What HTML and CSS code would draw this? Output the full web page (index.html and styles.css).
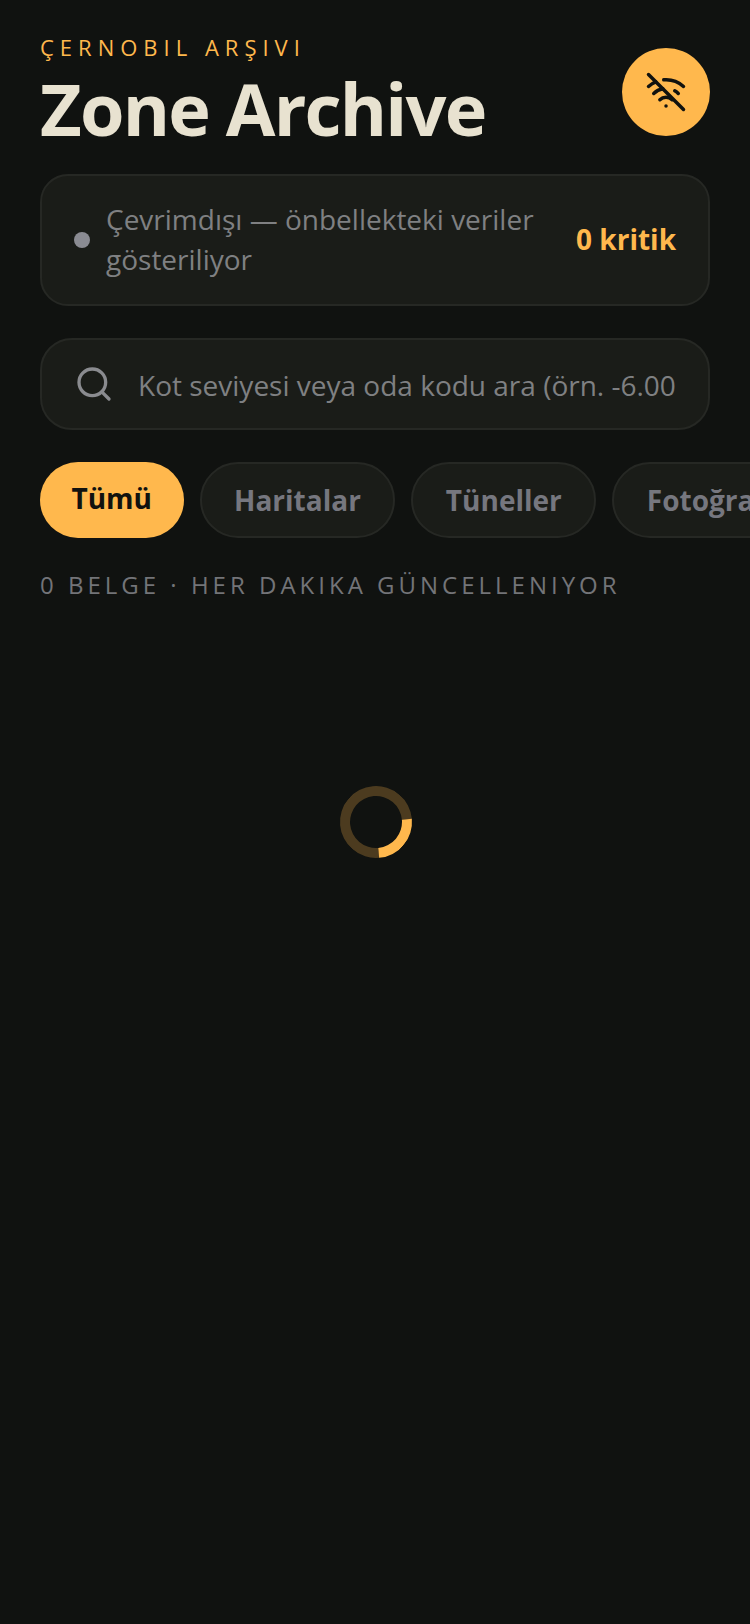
FILE: index.html
```html
<!DOCTYPE html>
<html lang="tr">
<head>
    <meta charset="UTF-8">
    <meta name="viewport" content="width=device-width, initial-scale=1.0">
    <title>Zone Archive</title>
    <link rel="stylesheet" href="styles.css">
</head>
<body>
    <div class="screen">
        <header class="top">
            <div>
                <div class="eyebrow">ÇERNOBIL ARŞIVI</div>
                <h1>Zone Archive</h1>
            </div>
            <button class="net-btn" aria-label="Çevrimdışı">
                <svg viewBox="0 0 24 24" width="42" height="42" fill="none" stroke="#11120f" stroke-width="2" stroke-linecap="round" stroke-linejoin="round">
                    <path d="M12 20h.01"/>
                    <path d="M8.5 16.429a5 5 0 0 1 7 0"/>
                    <path d="M5 12.859a10 10 0 0 1 5.17-2.69"/>
                    <path d="M19 12.859a10 10 0 0 0-2.007-1.523"/>
                    <path d="M2 8.82a15 15 0 0 1 4.177-2.643"/>
                    <path d="M22 8.82a15 15 0 0 0-11.288-3.764"/>
                    <path d="m2 2 20 20"/>
                </svg>
            </button>
        </header>

        <div class="status">
            <span class="dot"></span>
            <span class="status-text">Çevrimdışı — önbellekteki veriler gösteriliyor</span>
            <span class="critical">0 kritik</span>
        </div>

        <label class="search">
            <svg viewBox="0 0 24 24" width="40" height="40" fill="none" stroke="#8a8b8f" stroke-width="2" stroke-linecap="round" stroke-linejoin="round">
                <circle cx="11" cy="11" r="8"/>
                <path d="m21 21-4.3-4.3"/>
            </svg>
            <input type="text" placeholder="Kot seviyesi veya oda kodu ara (örn. -6.00)">
        </label>

        <div class="chips">
            <button class="chip active">Tümü</button>
            <button class="chip">Haritalar</button>
            <button class="chip">Tüneller</button>
            <button class="chip">Fotoğraflar</button>
        </div>

        <div class="summary">0 BELGE · HER DAKIKA GÜNCELLENIYOR</div>

        <div class="loader">
            <div class="spinner"></div>
        </div>
    </div>
</body>
</html>
```

FILE: styles.css
```css
* {
    box-sizing: border-box;
}

html, body {
    margin: 0;
    height: 100%;
}

body {
    background-color: #101210;
    font-family: "Open Sans", "Noto Sans", sans-serif;
    overflow: hidden;
}

.screen {
    padding: 33px 40px 0;
}

.top {
    display: flex;
    justify-content: space-between;
    align-items: flex-start;
}

.eyebrow {
    color: #ffb84d;
    font-size: 22px;
    line-height: 28px;
    letter-spacing: 6px;
}

h1 {
    margin: 5px 0 0;
    color: #e8e2d0;
    font-size: 72px;
    line-height: 84px;
    font-weight: 700;
    letter-spacing: -1.8px;
}

.net-btn {
    width: 88px;
    height: 88px;
    margin-top: 15px;
    border: none;
    border-radius: 50%;
    background: #ffb84d;
    display: flex;
    align-items: center;
    justify-content: center;
    padding: 0;
}

.status {
    display: flex;
    align-items: center;
    margin-top: 24px;
    height: 132px;
    padding: 0 32px 2px;
    background: #1a1c18;
    border: 2px solid #262824;
    border-radius: 28px;
}

.dot {
    flex: none;
    width: 16px;
    height: 16px;
    margin-top: 2px;
    margin-right: 16px;
    border-radius: 50%;
    background: #8a8b92;
}

.status-text {
    flex: 1;
    color: #7f8082;
    font-size: 28px;
    line-height: 40px;
}

.critical {
    flex: none;
    margin-left: 24px;
    color: #ffb84d;
    font-size: 28px;
    font-weight: 700;
}

.search {
    display: flex;
    align-items: center;
    gap: 24px;
    margin-top: 32px;
    height: 92px;
    padding: 0 32px;
    background: #1a1c18;
    border: 2px solid #262824;
    border-radius: 32px;
}

.search svg {
    flex: none;
}

.search input {
    flex: 1;
    min-width: 0;
    padding: 2px 0 0;
    border: none;
    outline: none;
    background: transparent;
    color: #7f8082;
    font-family: inherit;
    font-size: 28px;
}

.search input::placeholder {
    color: #7f8082;
    opacity: 1;
}

.chips {
    display: flex;
    gap: 16px;
    margin-top: 32px;
    margin-right: -40px;
    overflow: hidden;
}

.chip {
    flex: none;
    height: 76px;
    padding: 0 32.5px;
    background: #1a1c18;
    border: 2px solid #262824;
    border-radius: 38px;
    color: #76777f;
    font-family: inherit;
    font-size: 28px;
    font-weight: 700;
}

.chip.active {
    padding: 0 31.5px 4px;
    background: #ffb84d;
    border: none;
    color: #11120f;
}

.summary {
    margin-top: 31px;
    color: #737478;
    font-size: 24px;
    line-height: 32px;
    letter-spacing: 4px;
}

.loader {
    display: flex;
    justify-content: center;
    margin-top: 185px;
    padding-left: 2px;
}

.spinner {
    width: 72px;
    height: 72px;
    border-radius: 50%;
    border: 10px solid rgba(255, 184, 77, 0.25);
    border-right-color: #ffb84d;
    transform: rotate(40deg);
}
```
